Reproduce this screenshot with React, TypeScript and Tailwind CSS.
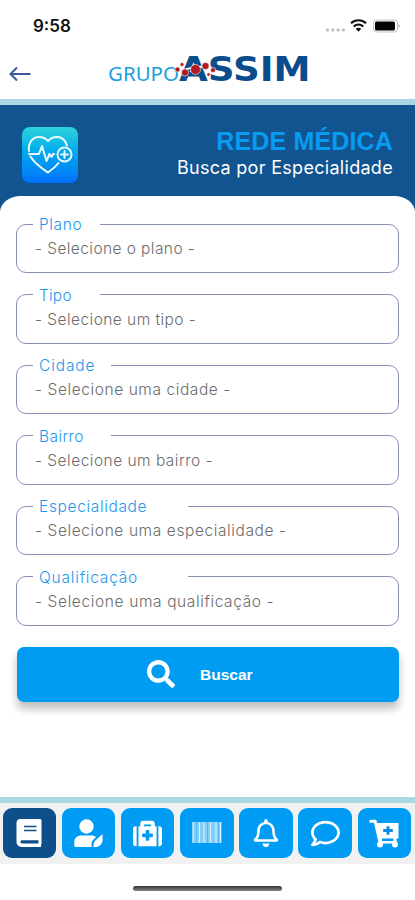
import React, { useState } from 'react';
import { FaMedkit, FaRegBell, FaRegComment, FaSearch } from 'react-icons/fa';

interface Field {
  id: string;
  label: string;
  placeholder: string;
  legendWidth: string;
  labelSpacing: string;
  textSpacing: string;
}

const fields: Field[] = [
  { id: 'plano', label: 'Plano', placeholder: '- Selecione o plano -', legendWidth: 'w-[67px]', labelSpacing: 'tracking-[0.6px]', textSpacing: 'tracking-[0.42px]' },
  { id: 'tipo', label: 'Tipo', placeholder: '- Selecione um tipo -', legendWidth: 'w-[67px]', labelSpacing: 'tracking-[0.2px]', textSpacing: 'tracking-[0.45px]' },
  { id: 'cidade', label: 'Cidade', placeholder: '- Selecione uma cidade -', legendWidth: 'w-[78px]', labelSpacing: 'tracking-[0.9px]', textSpacing: 'tracking-[0.58px]' },
  { id: 'bairro', label: 'Bairro', placeholder: '- Selecione um bairro -', legendWidth: 'w-[78px]', labelSpacing: 'tracking-[0.4px]', textSpacing: 'tracking-[0.48px]' },
  { id: 'especialidade', label: 'Especialidade', placeholder: '- Selecione uma especialidade -', legendWidth: 'w-[155px]', labelSpacing: 'tracking-[0.65px]', textSpacing: 'tracking-[0.6px]' },
  { id: 'qualificacao', label: 'Qualificação', placeholder: '- Selecione uma qualificação -', legendWidth: 'w-[155px]', labelSpacing: 'tracking-[0.8px]', textSpacing: 'tracking-[0.62px]' },
];

const StatusIcons = () => (
  <svg width="76" height="16" viewBox="0 0 76 16">
    <g fill="#bdbdbd">
      <rect x="1" y="11.5" width="3" height="3" rx="1" />
      <rect x="6.3" y="11.5" width="3" height="3" rx="1" />
      <rect x="11.6" y="11.5" width="3" height="3" rx="1" />
      <rect x="16.9" y="11.5" width="3" height="3" rx="1" />
    </g>
    <g fill="none" stroke="#111" strokeWidth="2.1">
      <path d="M26 6.3C30.2 2.3 36.8 2.3 41 6.3" />
      <path d="M28.7 9.6C31.5 7 35.5 7 38.3 9.6" />
    </g>
    <path d="M30.7 11.8c1.6-1.4 4-1.4 5.6 0l-2.800 2.900z" fill="#111" />
    <rect x="48.5" y="3" width="24" height="12" rx="3" fill="#fff" stroke="#c4c4c4" />
    <rect x="50" y="4.5" width="20" height="9" rx="1.5" fill="#050505" />
    <path d="M73.5 7v4c1.600-.4 1.600-3.600 0-4z" fill="#aaa" />
  </svg>
);

const Logo = () => (
  <svg width="204" height="36" viewBox="0 0 204 36" className="overflow-visible">
    <text x="0" y="29.5" fontSize="20" textLength="71" lengthAdjust="spacingAndGlyphs" fill="#1aa0dc" fontFamily="'Noto Sans', sans-serif">GRUPO</text>
    <text x="71" y="29.5" fontSize="33" textLength="131.5" lengthAdjust="spacingAndGlyphs" fill="#0b4c8c" fontFamily="'DejaVu Sans', sans-serif" fontWeight="700">ASSIM</text>
    <path d="M73 21c6-4 17-7 29-4" fill="none" stroke="#fff" strokeWidth="2" />
    <g fill="#b01a20" stroke="#fff" strokeWidth="0.6">
      <circle cx="69.5" cy="18.5" r="2.5" />
      <circle cx="74" cy="13.5" r="1.9" />
      <circle cx="77" cy="21.5" r="3.6" />
      <circle cx="87.5" cy="18.500" r="5" />
      <circle cx="97.5" cy="15" r="3.6" />
      <circle cx="105" cy="19" r="2.5" />
      <circle cx="100.5" cy="23.5" r="1.7" />
    </g>
  </svg>
);

const HeartIcon = () => (
  <svg width="56" height="56" viewBox="0 0 56 56" fill="none" stroke="#e8faff" strokeWidth="2" strokeLinecap="round" strokeLinejoin="round">
    <path d="M7 27H17l3-8 4.500 15 3-7 2 3 1.500-3H32" />
    <path d="M7 24C6 15 11 10 17 10c4 0 7 1.500 9 4 2-2.500 5-4 9-4 5 0 8.500 3.500 10 8.500M8.500 29.500C13 37 20 41.500 26 45.500c4-3 7-5 10.500-9.500" />
    <circle cx="42.5" cy="27.5" r="7" />
    <path d="M42.500 24v7M39 27.500h7" />
  </svg>
);

const BookIcon = () => (
  <svg width="26" height="28" viewBox="0 0 26 28">
    <path d="M4.500 0H24a1.500 1.500 0 0 1 1.500 1.500V25c0 .5-.3.800-.5 1v2H5.500A5 5 0 0 1 .5 23V4A4 4 0 0 1 4.500 0z" fill="#fff" />
    <path d="M8 7.500h12.500M8 11.500h12.500" stroke="#0d4e8b" strokeWidth="1.6" />
    <path d="M6 21.200h16.500v3.300H6a1.650 1.650 0 0 1 0-3.300z" fill="#0d4e8b" />
  </svg>
);

const UserEditIcon = () => (
  <svg width="30" height="30" viewBox="0 0 30 30" fill="#fff">
    <circle cx="13.5" cy="8.5" r="7.2" />
    <path d="M8.500 17.500h10c2 0 3.500.6 4.500 1.800-3 2.400-4.500 4.200-4.500 6.700v3H3c-1.100 0-1.700-.7-1.700-1.800V24c0-4 3-6.500 7.200-6.500z" />
    <path d="M29.500 16v7.500c-1 3-3.500 5.500-6.500 5.500h-2.500c-.5-3 .5-5.500 3-7.500z" />
  </svg>
);

const BarcodeIcon = () => (
  <svg width="30" height="24" viewBox="0 0 30 24">
    <rect x="0.5" y="1" width="29" height="21" fill="#83cdfb" />
    <path d="M1 1v21M7.500 1v21M12 1v21M18.500 1v21M24 1v21M28.500 1v21" stroke="#d8f0ff" strokeWidth="1.1" />
    <path d="M4.500 1v21M15.500 1v21M26.500 1v21" stroke="#4ab5f7" strokeWidth="0.8" />
  </svg>
);

const CartIcon = () => (
  <svg width="30" height="29" viewBox="0 0 30 29">
    <path d="M1.800 2.300h4.400L10.500 21.500" fill="none" stroke="#fff" strokeWidth="3" strokeLinecap="round" strokeLinejoin="round" />
    <path d="M7 4h22.500v15.500H10z" fill="#fff" />
    <path d="M10 22h18v2.500H10z" fill="#fff" />
    <path d="M11.500 19v6M26 19v6" stroke="#fff" strokeWidth="3" />
    <circle cx="11" cy="25.5" r="3" fill="#fff" />
    <circle cx="26" cy="25.5" r="3" fill="#fff" />
    <path d="M19 7.200v8.600M14.200 11.500h9.600" stroke="#0a8ee2" strokeWidth="3" />
  </svg>
);

const tabs = [
  { id: 'guia', icon: <BookIcon /> },
  { id: 'perfil', icon: <UserEditIcon /> },
  { id: 'saude', icon: <FaMedkit className="h-[29px] w-[29px]" /> },
  { id: 'carteira', icon: <BarcodeIcon /> },
  { id: 'avisos', icon: <FaRegBell className="h-[28px] w-[26px]" /> },
  { id: 'chat', icon: <FaRegComment className="h-[29px] w-[29px]" /> },
  { id: 'loja', icon: <CartIcon /> },
];

const App = () => {
  const [activeTab, setActiveTab] = useState('guia');

  return (
    <div className="flex h-[900px] w-[415px] flex-col overflow-hidden bg-white font-['Inter',sans-serif]">
      {/* Barra de status */}
      <div className="flex h-[46px] shrink-0 items-start justify-between pl-[33px] pr-[14px] pt-[17px]">
        <span className="text-[17px] font-semibold leading-[19px] text-[#111]">9:58</span>
        <StatusIcons />
      </div>

      {/* Cabeçalho com o logo */}
      <header className="flex h-[53px] shrink-0 items-start pl-[9px]">
        <button className="mt-[20px] w-[99px]" aria-label="Voltar">
          <svg width="23" height="16" viewBox="0 0 23 16" fill="none" stroke="#3e589b" strokeWidth="2">
            <path d="M21.500 8H1.500M8 1.500L1.500 8L8 14.500" />
          </svg>
        </button>
        <div className="mt-[5px]">
          <Logo />
        </div>
      </header>

      {/* Título da tela */}
      <section className="h-[113px] shrink-0 border-t-[6px] border-[#a9d7e3] bg-[#12548f]">
        <div className="flex h-[91px] justify-between pl-[22px] pr-[22px]">
          <div className="mt-[22px] h-[56px] w-[56px] rounded-[8px] bg-linear-to-b from-[#2ed3dc] to-[#0070fb]">
            <HeartIcon />
          </div>
          <div className="flex flex-col items-end pt-[22px]">
            <h1 className="font-['Liberation_Sans',sans-serif] text-[25px] font-bold leading-[28px] tracking-[0.15px] text-[#079bf2]">REDE MÉDICA</h1>
            <p className="mt-px text-[18px] leading-[23px] tracking-[0.3px] text-white">Busca por Especialidade</p>
          </div>
        </div>
        <div className="h-[16px] rounded-t-[22px_17px] bg-white" />
      </section>

      <main className="flex h-[585px] shrink-0 flex-col px-[16px]">
        <div className="mt-[2px] flex flex-col gap-[11.6px]">
          {fields.map((field) => (
            <fieldset key={field.id} className="h-[59px] rounded-[10px] border-[1.5px] border-[#8790b5] pl-[16px]">
              <legend className={`h-[20px] pl-[6px] text-[15.5px] font-light leading-[22px] text-[#1c97ed] ${field.legendWidth} ${field.labelSpacing}`}>
                {field.label}
              </legend>
              <p className={`pl-[2px] pt-[4px] text-[15.5px] font-light leading-[22px] text-[#6c6c6c] ${field.textSpacing}`}>{field.placeholder}</p>
            </fieldset>
          ))}
        </div>

        <button className="ml-px mt-[21px] flex h-[55px] w-[382px] shrink-0 items-center rounded-[7px] bg-[#009cf1] pl-[130px] text-white shadow-[0_7px_9px_rgba(0,0,0,0.25)]">
          <FaSearch className="h-[28px] w-[28px]" />
          <span className="ml-[25px] font-['Liberation_Sans',sans-serif] text-[15.5px] font-bold">Buscar</span>
        </button>
      </main>

      {/* Navegação inferior */}
      <nav className="flex h-[67px] shrink-0 gap-[5.7px] border-t-[6px] border-[#aad8e4] bg-[#f1f1f1] pl-[2.5px] pt-[5px]">
        {tabs.map((tab) => (
          <button
            key={tab.id}
            onClick={() => setActiveTab(tab.id)}
            className={`flex h-[50px] w-[53.5px] shrink-0 items-center justify-center rounded-[9px] text-white ${activeTab === tab.id ? 'bg-[#0d4e8b]' : 'bg-[#009cf3]'}`}
          >
            {tab.icon}
          </button>
        ))}
      </nav>
      <div className="mx-auto mt-[22px] h-[5px] w-[149px] shrink-0 rounded-full bg-linear-to-b from-[#333] to-[#888]" />
    </div>
  );
};

export default App;
